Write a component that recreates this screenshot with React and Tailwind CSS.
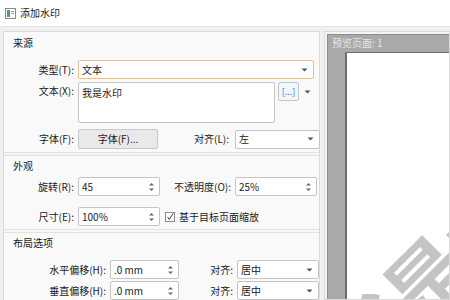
import React from "react";

const font = { fontFamily: '"Noto Sans CJK SC", "Noto Sans", sans-serif' };

function Caret() {
  return (
    <svg width="7" height="4" viewBox="0 0 7 4" className="shrink-0">
      <path d="M0.5 0.5 L6.5 0.5 L3.5 3.5 Z" fill="#555" />
    </svg>
  );
}

function Spin() {
  return (
    <svg width="7" height="10" viewBox="0 0 7 10" className="shrink-0">
      <path d="M1 3.5 L3.5 1 L6 3.5 Z" fill="#666" />
      <path d="M1 6.5 L3.5 9 L6 6.5 Z" fill="#666" />
    </svg>
  );
}

function Combo({ value, width, focus }) {
  return (
    <div
      className={
        "h-[19px] flex items-center justify-between pl-[3px] pr-[5px] rounded-[2px] bg-white border shrink-0 " +
        (focus ? "border-[#dcc39c]" : "border-[#c4c4c4]")
      }
      style={{ width }}
    >
      <span>{value}</span>
      <Caret />
    </div>
  );
}

function SpinBox({ value, width }) {
  return (
    <div
      className="h-[19px] flex items-center justify-between pl-[3px] pr-[4px] rounded-[2px] bg-white border border-[#c4c4c4] shrink-0"
      style={{ width }}
    >
      <span>{value}</span>
      <Spin />
    </div>
  );
}

function Label({ children, width }) {
  return (
    <div className="text-right shrink-0 whitespace-nowrap" style={{ width }}>
      {children}
    </div>
  );
}

function Header({ children }) {
  return <div className="h-[20px] flex items-center pl-[9px]">{children}</div>;
}

export default function App() {
  return (
    <div
      className="w-[450px] h-[300px] overflow-hidden bg-[#f0f0f0] text-[10px] text-[#1a1a1a] leading-none"
      style={font}
    >
      {/* title bar */}
      <div className="h-[27px] bg-white flex items-center pl-[5px] gap-[4px] border-b border-[#e3e3e3]">
        <svg width="11" height="11" viewBox="0 0 11 11">
          <rect x="0.5" y="0.5" width="10" height="10" fill="#fff" stroke="#8a8a8a" />
          <rect x="2" y="2" width="3" height="7" fill="#5a9a6a" />
          <rect x="6" y="3" width="3" height="1" fill="#999" />
          <rect x="6" y="5" width="3" height="1" fill="#999" />
        </svg>
        <span className="text-[10px]">添加水印</span>
      </div>

      <div className="flex pt-[4px] pl-[3px] gap-[4px] h-[273px]">
        {/* left panel */}
        <div className="w-[317px] shrink-0 border border-[#dadada] bg-[#f7f7f7] flex flex-col">
          {/* 来源 */}
          <div className="bg-[#f9f9f9] pb-[3px] border-b border-[#e2e2e2]">
            <div className="h-[22px] flex items-center pl-[9px]">来源</div>
            <div className="flex flex-col gap-[3px] pt-[6px]">
              <div className="flex items-center gap-[4px]">
                <Label width={70}>类型(T):</Label>
                <Combo value="文本" width={236} focus />
              </div>
              <div className="flex items-start gap-[4px]">
                <Label width={70}>
                  <div className="pt-[4px]">文本(X):</div>
                </Label>
                <div className="w-[197px] h-[41px] bg-white border border-[#c4c4c4] rounded-[2px] pl-[3px] pt-[5px]">
                  我是水印
                </div>
                <div className="flex items-center gap-[2px] ml-[-1px]">
                  <div className="w-[21px] h-[19px] border border-[#c4c4c4] bg-[#f3f6fa] rounded-[2px] flex items-center justify-center text-[9px] text-[#3a74c0]">
                    [...]
                  </div>
                  <div className="w-[13px] h-[19px] flex items-center justify-center">
                    <Caret />
                  </div>
                </div>
              </div>
              <div className="flex items-center gap-[4px] pt-[3px]">
                <Label width={70}>字体(F):</Label>
                <div className="w-[80px] h-[20px] bg-[#e9e9e9] border border-[#c8c8c8] rounded-[2px] flex items-center justify-center shrink-0">
                  字体(F)...
                </div>
                <Label width={67}>对齐(L):</Label>
                <div className="ml-[2px]">
                  <Combo value="左" width={85} />
                </div>
              </div>
            </div>
          </div>

          {/* 外观 */}
          <div className="mt-[2px] bg-[#f9f9f9] pb-[3px] border-y border-[#e2e2e2]">
            <Header>外观</Header>
            <div className="flex flex-col gap-[11px] pt-[1px]">
              <div className="flex items-center gap-[4px]">
                <Label width={70}>旋转(R):</Label>
                <SpinBox value="45" width={82} />
                <Label width={67}>不透明度(O):</Label>
                <SpinBox value="25%" width={82} />
              </div>
              <div className="flex items-center gap-[4px]">
                <Label width={70}>尺寸(E):</Label>
                <SpinBox value="100%" width={82} />
                <div className="w-[10px] h-[10px] border border-[#8a8a8a] bg-white flex items-center justify-center ml-[1px]">
                  <svg width="10" height="10" viewBox="0 0 10 10">
                    <path d="M2 5 L4 8 L9 0.5" stroke="#333" strokeWidth="1.2" fill="none" />
                  </svg>
                </div>
                <span>基于目标页面缩放</span>
              </div>
            </div>
          </div>

          {/* 布局选项 */}
          <div className="mt-[2px] bg-[#f9f9f9] flex-1 border-t border-[#e2e2e2]">
            <Header>布局选项</Header>
            <div className="flex flex-col gap-[2px] pt-[7px]">
              <div className="flex items-center gap-[4px]">
                <Label width={102}>水平偏移(H):</Label>
                <SpinBox value=".0 mm" width={69} />
                <Label width={50}>对齐:</Label>
                <Combo value="居中" width={82} />
              </div>
              <div className="flex items-center gap-[4px]">
                <Label width={102}>垂直偏移(H):</Label>
                <SpinBox value=".0 mm" width={69} />
                <Label width={50}>对齐:</Label>
                <Combo value="居中" width={82} />
              </div>
            </div>
          </div>
        </div>

        {/* preview */}
        <div className="flex-1 border border-[#dadada] bg-[#f4f4f4] pl-[2px] pt-[2px]">
          <div className="h-full bg-[#a9a9a9] border-l border-t border-[#8c8c8c] flex flex-col">
            <div className="h-[15px] flex items-center pl-[4px] text-[10px] text-[#e6e6e6]">
              预览页面: 1
            </div>
            <div className="flex-1 ml-[17px] mt-[2px] bg-white border-l-2 border-t border-[#6e6e6e] relative overflow-hidden">
              <div
                className="absolute left-[-8px] top-[268px] whitespace-nowrap text-[80px] font-bold text-[#c4c4c4] origin-left"
                style={{ transform: "rotate(-45deg)" }}
              >
                我是水印
              </div>
            </div>
          </div>
        </div>
      </div>
    </div>
  );
}
